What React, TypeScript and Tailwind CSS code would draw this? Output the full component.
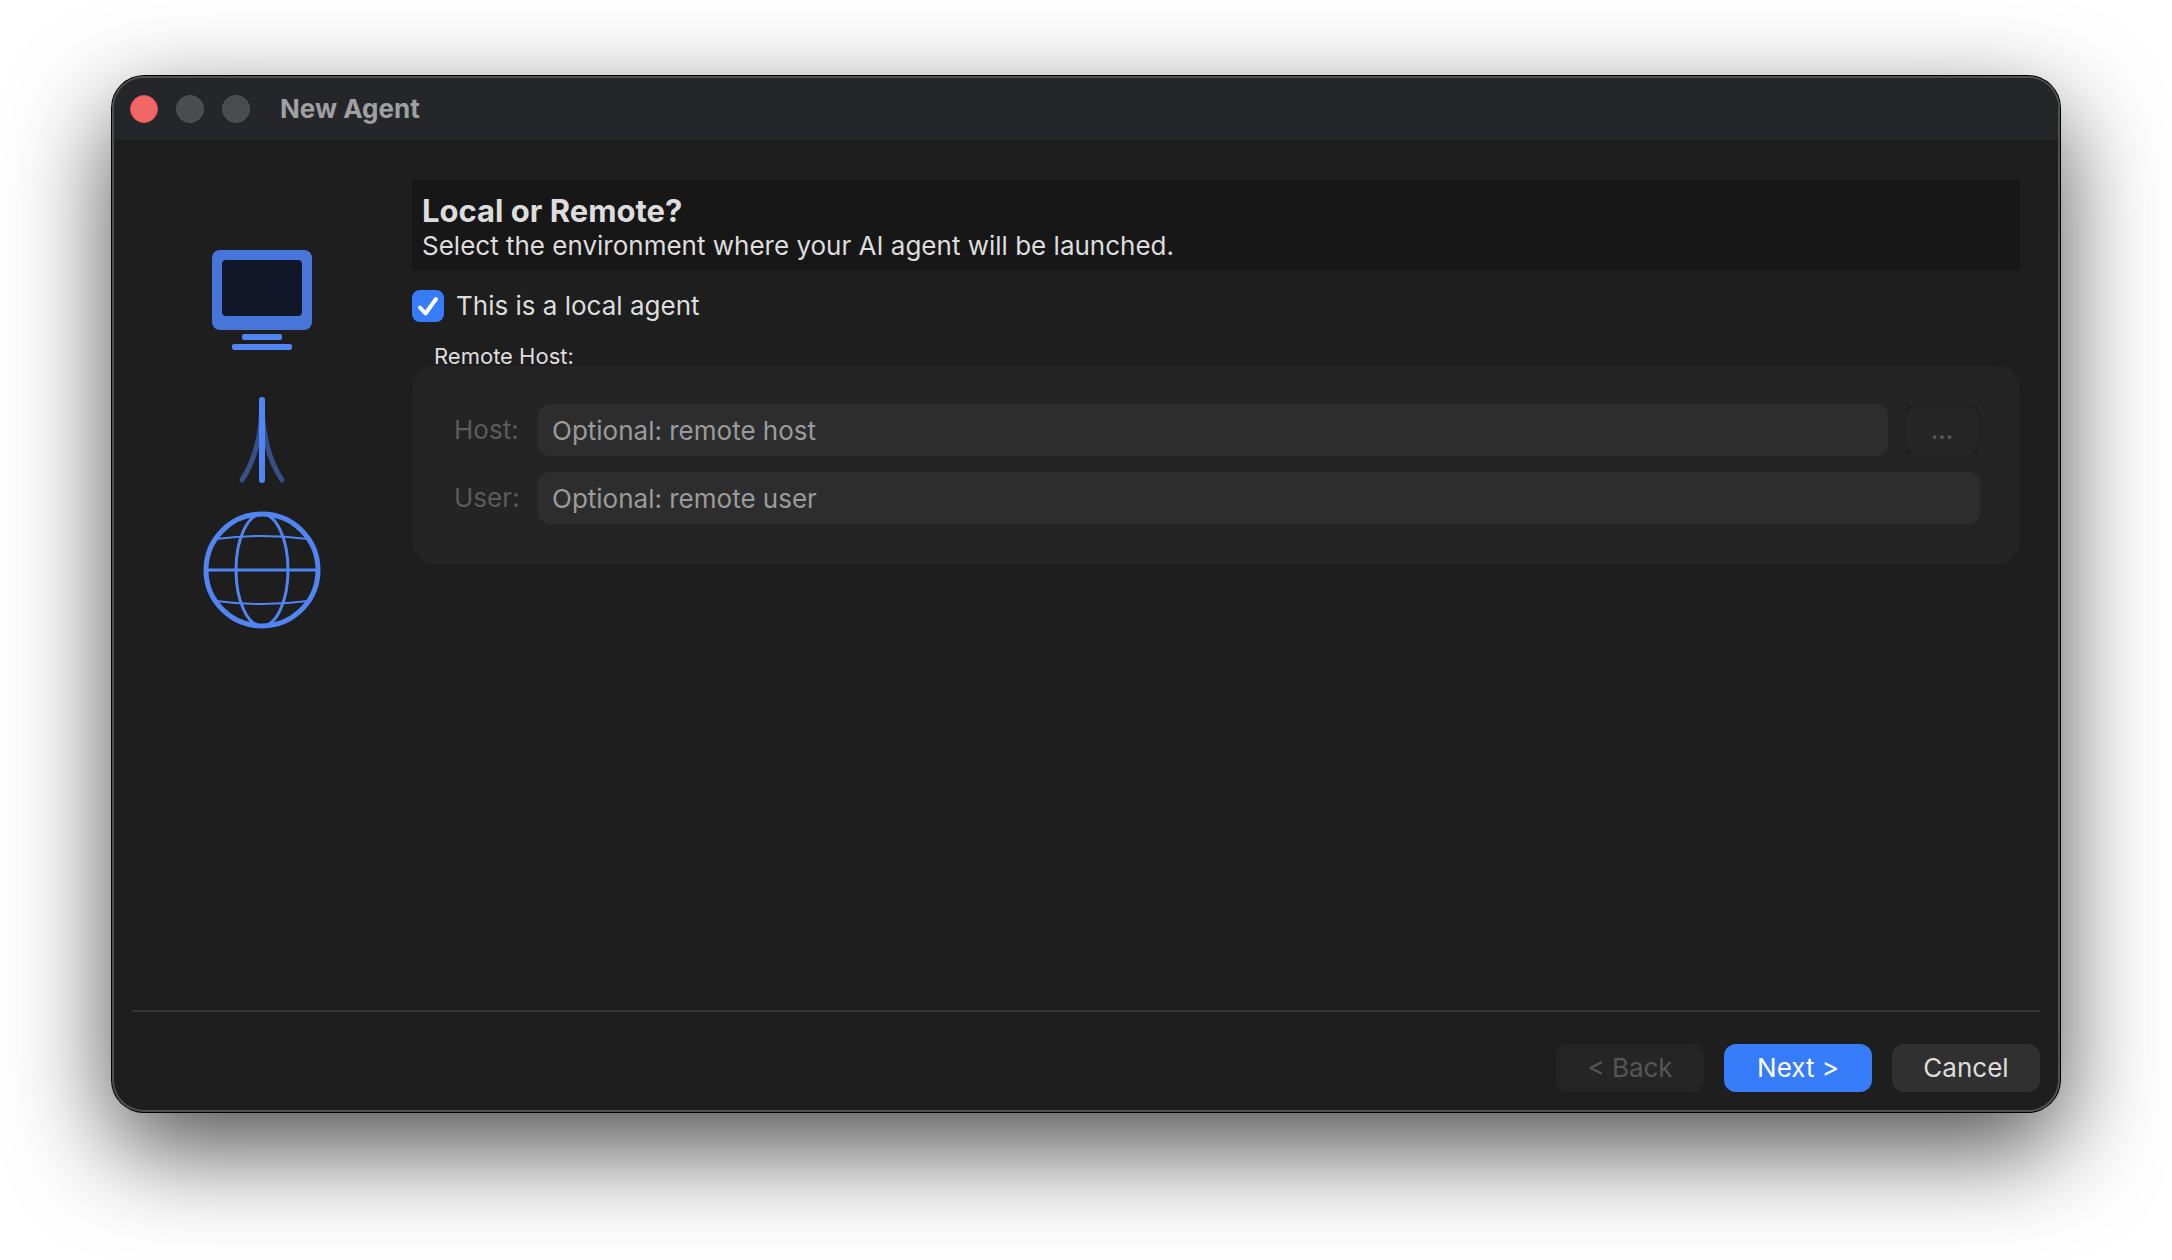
import React, { useState } from "react";

function TrafficLights() {
  return (
    <div className="flex items-center gap-[18px]">
      <button type="button" aria-label="Close" className="h-7 w-7 rounded-full border border-[#e8504d] bg-[#f06766]" />
      <button type="button" aria-label="Minimize" disabled className="h-7 w-7 rounded-full border border-[#525356] bg-[#4b4c4f]" />
      <button type="button" aria-label="Zoom" disabled className="h-7 w-7 rounded-full border border-[#525356] bg-[#4b4c4f]" />
    </div>
  );
}

function ConnectionIllustration() {
  return (
    <svg viewBox="0 0 120 400" fill="none" className="h-[400px] w-[120px]" aria-hidden="true">
      {/* computer */}
      <rect x="10" y="10" width="100" height="80" rx="8" fill="#4875d9" />
      <rect x="20" y="20" width="80" height="56" rx="4" fill="#111729" />
      <rect x="40" y="94" width="40" height="6" rx="2" fill="#5085f3" />
      <rect x="30" y="104" width="60" height="6" rx="2" fill="#5085f3" />

      {/* link */}
      <g stroke="#5085f3" strokeWidth="5" strokeLinecap="round">
        <path d="M60 160Q60 210 40 240" stroke="#365088" />
        <path d="M60 160Q60 210 80 240" stroke="#365088" />
        <path d="M60 160V240" strokeWidth="6" />
      </g>

      {/* globe */}
      <g stroke="#5085f3">
        <circle cx="60" cy="330" r="56" strokeWidth="5" />
        <ellipse cx="60" cy="330" rx="26" ry="56" strokeWidth="3" />
        <path d="M4 330H116" strokeWidth="3" />
        <path d="M14 299Q60 293 106 299" strokeWidth="2" />
        <path d="M14 361Q60 367 106 361" strokeWidth="2" />
      </g>
    </svg>
  );
}

type FieldProps = {
  id: string;
  placeholder: string;
  value: string;
  disabled: boolean;
  onChange: (value: string) => void;
};

function Field({ id, placeholder, value, disabled, onChange }: FieldProps) {
  return (
    <input
      id={id}
      type="text"
      value={value}
      disabled={disabled}
      onChange={(e) => onChange(e.target.value)}
      placeholder={placeholder}
      className="h-[52px] min-w-0 flex-1 rounded-xl bg-[#2d2d2d] px-3.5 text-[#dddddd] placeholder:text-[#9b9b9b]"
    />
  );
}

export default function App() {
  const [isLocal, setIsLocal] = useState(true);
  const [host, setHost] = useState("");
  const [user, setUser] = useState("");

  const labelColor = isLocal ? "text-[#5c5c5c]" : "text-[#dddddd]";

  return (
    <div className="flex min-h-screen bg-white px-28 pt-[76px] pb-[148px] font-['Inter','Liberation_Sans',sans-serif] text-[26px] leading-8 text-[#dddddd]">
      <div className="flex flex-1 flex-col rounded-[32px] bg-[#1e1e1e] shadow-[inset_0_0_0_2px_#505050,0_0_0_1px_#000000,0_36px_100px_rgba(0,0,0,0.7)]">
        <header className="m-0.5 mb-0 flex h-[62px] items-center gap-[30px] rounded-t-[30px] bg-[#25262a] px-4">
          <TrafficLights />
          <h1 className="font-bold text-[#9fa0a2]">New Agent</h1>
        </header>

        <div className="flex flex-1">
          <aside className="flex w-[300px] shrink-0 justify-center pt-[100px]">
            <ConnectionIllustration />
          </aside>

          <main className="flex-1 pt-10 pr-10">
            <div className="bg-[#171717] px-2.5 pt-3 pb-2">
              <h2 className="text-[31px] leading-[38px] font-bold">Local or Remote?</h2>
              <p>Select the environment where your AI agent will be launched.</p>
            </div>

            <label className="mt-5 flex w-fit items-center gap-3">
              <span className="grid h-8 w-8">
                <input
                  type="checkbox"
                  checked={isLocal}
                  onChange={(e) => setIsLocal(e.target.checked)}
                  className="peer col-start-1 row-start-1 appearance-none rounded-lg bg-[#3a3a3a] checked:bg-[#367bf8]"
                />
                <svg
                  viewBox="0 0 32 32"
                  fill="none"
                  className="pointer-events-none invisible col-start-1 row-start-1 peer-checked:visible"
                >
                  <path d="M8 17.5L13.5 23.5L24 9" stroke="white" strokeWidth="4" strokeLinecap="round" strokeLinejoin="round" />
                </svg>
              </span>
              This is a local agent
            </label>

            <fieldset className="mt-6">
              <legend className="px-[22px] text-[22px] leading-5">Remote Host:</legend>
              <div className="flex flex-col gap-4 rounded-3xl bg-[#242424] pt-[38px] pr-10 pb-10 pl-[42px]">
                <div className="flex items-center">
                  <label htmlFor="host" className={`w-[84px] ${labelColor}`}>
                    Host:
                  </label>
                  <Field id="host" placeholder="Optional: remote host" value={host} disabled={isLocal} onChange={setHost} />
                  <div className="mr-0.5 ml-[18px] bg-[#1e1e1e]">
                    <button
                      type="button"
                      disabled={isLocal}
                      className="block h-12 w-[72px] rounded-xl bg-[#262626] text-[#5c5c5c]"
                    >
                      ...
                    </button>
                  </div>
                </div>
                <div className="flex items-center">
                  <label htmlFor="user" className={`w-[84px] ${labelColor}`}>
                    User:
                  </label>
                  <Field id="user" placeholder="Optional: remote user" value={user} disabled={isLocal} onChange={setUser} />
                </div>
              </div>
            </fieldset>
          </main>
        </div>

        <footer className="mx-5 flex justify-end gap-5 border-t-2 border-[#333333] pt-8 pb-5">
          <button type="button" disabled className="h-12 w-[148px] rounded-xl bg-[#252525] text-[#565656]">
            &lt; Back
          </button>
          <button type="button" className="h-12 w-[148px] rounded-xl bg-[#367bf8] text-white">
            Next &gt;
          </button>
          <button type="button" className="h-12 w-[148px] rounded-xl bg-[#303030]">
            Cancel
          </button>
        </footer>
      </div>
    </div>
  );
}
